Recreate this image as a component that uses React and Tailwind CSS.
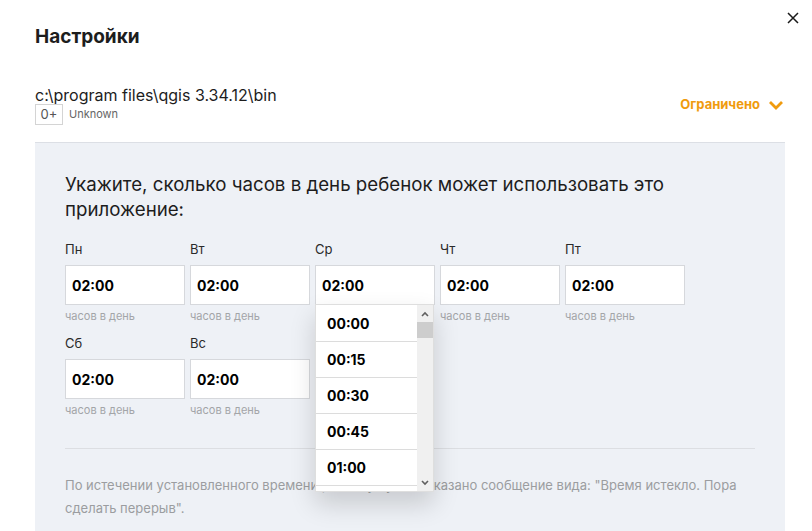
import React from "react";

const font = { fontFamily: "Inter, 'Noto Sans', sans-serif" };

function DayCell({ label, dropdown }) {
  return (
    <div className="relative flex flex-col">
      <div className="h-[16px] text-[13px] leading-[16px] text-[#2a2a2a]">{label}</div>
      <div className="mt-[8px] h-[40px] w-[120px] border border-[#d6d8dc] bg-white flex items-center pl-[6px] text-[14px] font-bold text-black">
        02:00
      </div>
      <div className="mt-[5px] h-[12px] text-[11px] leading-[12px] text-[#a3a5a8]">часов в день</div>
      {dropdown && (
        <div className="absolute left-0 top-[63px] z-10 w-[119px] h-[188px] bg-white border border-[#dedede] flex shadow-[0_12px_24px_rgba(0,0,0,0.16)] overflow-hidden">
          <div className="w-[101px] flex flex-col">
            {["00:00", "00:15", "00:30", "00:45", "01:00", "01:15"].map((t, i) => (
              <div
                key={t}
                className={"h-[36px] shrink-0 flex items-center pl-[11px] text-[14px] font-bold text-black " + (i > 0 ? "border-t border-[#dcdcdc]" : "")}
              >
                {t}
              </div>
            ))}
          </div>
          <div className="flex-1 bg-[#f0f0f0] flex flex-col items-center">
            <svg width="10" height="8" viewBox="0 0 10 8" className="mt-[5px]">
              <path d="M2 6 L5 3 L8 6" stroke="#606060" strokeWidth="1.6" fill="none" />
            </svg>
            <div className="mt-[4px] w-full h-[16px] bg-[#cdcdcd]" />
            <div className="flex-1" />
            <svg width="10" height="8" viewBox="0 0 10 8" className="mb-[4px]">
              <path d="M2 2 L5 5 L8 2" stroke="#606060" strokeWidth="1.6" fill="none" />
            </svg>
          </div>
        </div>
      )}
    </div>
  );
}

export default function App() {
  return (
    <div className="relative w-[812px] h-[531px] bg-white overflow-hidden" style={font}>
      <svg className="absolute left-[787px] top-[12px]" width="12" height="12" viewBox="0 0 12 12">
        <path d="M1 1 L11 11 M11 1 L1 11" stroke="#1a1a1a" strokeWidth="1.5" />
      </svg>
      <div className="pl-[35px] pr-[27px]">
        <div className="pt-[25px] h-[50px] text-[19px] font-bold leading-[24px] text-[#1d1d1d]">Настройки</div>
        <div className="mt-[35px] flex items-start justify-between">
          <div>
            <div className="text-[16px] leading-[20px] text-[#1d1d1d]">c:\program files\qgis 3.34.12\bin</div>
            <div className="mt-[-1px] flex items-center gap-[6px]">
              <div className="h-[21px] w-[28px] border border-[#d4d4d4] flex items-center justify-center text-[13px] text-[#555]">0+</div>
              <div className="text-[11px] text-[#666]">Unknown</div>
            </div>
          </div>
          <div className="mt-[10px] mr-[1px] flex items-center gap-[8px] text-[13px] font-bold text-[#f09b0e]">
            Ограничено
            <svg width="16" height="12" viewBox="0 0 16 12">
              <path d="M2 3 L8 9 L14 3" stroke="#f09b0e" strokeWidth="2.8" fill="none" />
            </svg>
          </div>
        </div>
        <div className="mt-[17px] h-[400px] bg-[#eef1f6] border-t border-[#dcdfe5] px-[30px] pt-[29px]">
          <div className="text-[18.7px] leading-[25px] text-[#1d1d1d]">
            Укажите, сколько часов в день ребенок может использовать это
            <br />
            приложение:
          </div>
          <div className="mt-[19px] grid grid-cols-[120px_120px_120px_120px_120px] gap-x-[5px] gap-y-[13px]">
            <DayCell label="Пн" />
            <DayCell label="Вт" />
            <DayCell label="Ср" dropdown />
            <DayCell label="Чт" />
            <DayCell label="Пт" />
            <DayCell label="Сб" />
            <DayCell label="Вс" />
          </div>
          <div className="mt-[32px] border-t border-[#dcdee2]" />
          <div className="mt-[25px] text-[13px] leading-[23px] text-[#9b9da0]">
            По истечении установленного времени ребенку будет показано сообщение вида: "Время истекло. Пора
            <br />
            сделать перерыв".
          </div>
        </div>
      </div>
    </div>
  );
}
